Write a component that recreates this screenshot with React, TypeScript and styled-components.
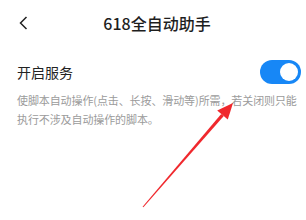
import React from "react";
import styled, { createGlobalStyle } from "styled-components";

const GlobalStyle = createGlobalStyle`
  html, body {
    margin: 0;
    padding: 0;
    background: #ffffff;
  }
  body {
    font-family: "Noto Sans CJK SC", "Noto Sans", sans-serif;
  }
`;

const Page = styled.div`
  position: relative;
  width: 306px;
  height: 220px;
  overflow: hidden;
  background: #ffffff;
`;

const Header = styled.div`
  display: flex;
  align-items: center;
  height: 46px;
  padding-left: 10px;
`;

const BackButton = styled.div`
  width: 30px;
  height: 46px;
  display: flex;
  align-items: center;
  padding-left: 9px;
  box-sizing: border-box;
`;

const Title = styled.div`
  flex: 1;
  margin-right: 32px;
  text-align: center;
  font-size: 16px;
  font-weight: 500;
  color: #1e1e1e;
  line-height: 46px;
`;

const Row = styled.div`
  display: flex;
  align-items: center;
  justify-content: space-between;
  height: 38px;
  margin-top: 7px;
  padding: 0 5px 0 17px;
`;

const Label = styled.div`
  font-size: 14px;
  color: #222222;
`;

const Toggle = styled.div<{ $on: boolean }>`
  position: relative;
  width: 41px;
  height: 24px;
  border-radius: 12px;
  background: ${(p) => (p.$on ? "#1787f6" : "#d8d8d8")};
`;

const Knob = styled.div<{ $on: boolean }>`
  position: absolute;
  top: 3px;
  ${(p) => (p.$on ? "right: 3px;" : "left: 3px;")}
  width: 18px;
  height: 18px;
  border-radius: 50%;
  background: #ffffff;
`;

const Desc = styled.div`
  padding: 0 6px 0 17px;
  font-size: 11px;
  line-height: 19px;
  letter-spacing: -0.1px;
  color: #9b9b9b;
  white-space: nowrap;
`;

const Annotation = styled.svg`
  position: absolute;
  left: 0;
  top: 0;
  pointer-events: none;
`;

export default function App() {
  return (
    <Page>
      <GlobalStyle />
      <Header>
        <BackButton>
          <svg width="9" height="14" viewBox="0 0 9 14">
            <path d="M7.5 1 L1.5 7 L7.5 13" fill="none" stroke="#222" strokeWidth="1.5" />
          </svg>
        </BackButton>
        <Title>618全自动助手</Title>
      </Header>
      <Row>
        <Label>开启服务</Label>
        <Toggle $on>
          <Knob $on />
        </Toggle>
      </Row>
      <Desc>
        使脚本自动操作(点击、长按、滑动等)所需，若关闭则只能
        <br />
        执行不涉及自动操作的脚本。
      </Desc>
      <Annotation width="306" height="220" viewBox="0 0 306 220">
        <polygon
          points="142.6,206.7 143.4,207.3 223.8,116.1 221.2,113.9"
          fill="#f0282d"
        />
        <polygon points="233,103 217.2,110.4 227.8,119.6" fill="#f0282d" />
      </Annotation>
    </Page>
  );
}
